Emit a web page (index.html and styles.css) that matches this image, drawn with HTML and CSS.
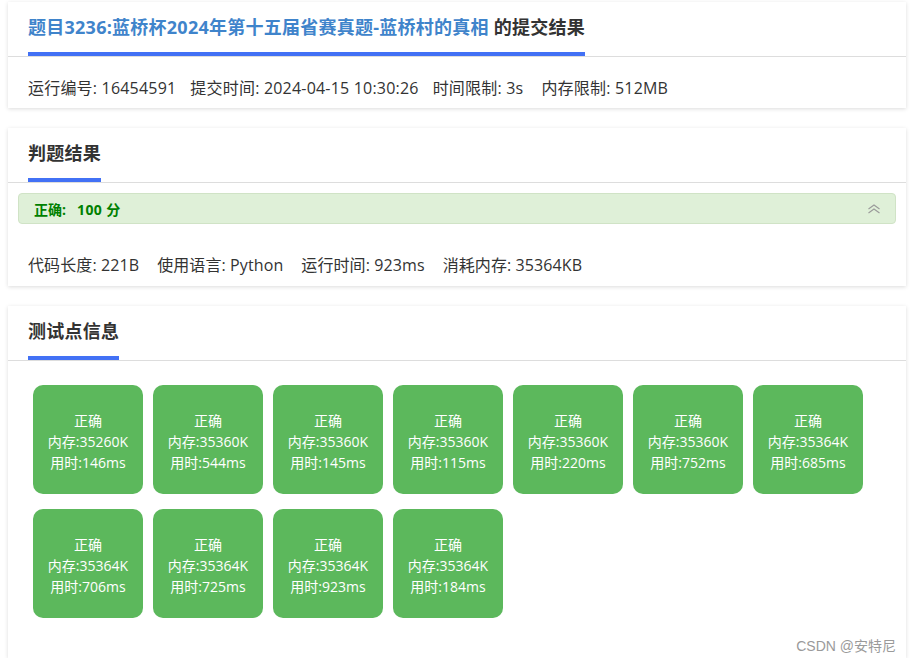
FILE: index.html
```html
<!DOCTYPE html>
<html lang="zh-CN">
<head>
<meta charset="utf-8">
<title>提交结果</title>
<link rel="stylesheet" href="styles.css">
</head>
<body>
<div class="page">
  <section class="card">
    <div class="card-head">
      <h2 class="card-title"><span class="problem-link">题目3236:蓝桥杯2024年第十五届省赛真题-蓝桥村的真相</span> 的提交结果</h2>
    </div>
    <div class="meta meta-top">
      <span>运行编号: 16454591</span>
      <span>提交时间: 2024-04-15 10:30:26</span>
      <span>时间限制: 3s</span>
      <span class="wide">内存限制: 512MB</span>
    </div>
  </section>

  <section class="card">
    <div class="card-head">
      <h2 class="card-title">判题结果</h2>
    </div>
    <div class="alert">
      <span class="alert-text">正确:<span class="score">100 分</span></span>
      <svg class="chev" width="14" height="10" viewBox="0 0 14 10" aria-hidden="true">
        <path d="M1.5 5 L7 1 L12.5 5 M1.5 9 L7 5 L12.5 9" fill="none" stroke="#9a9a9a" stroke-width="1.1"/>
      </svg>
    </div>
    <div class="meta meta-result">
      <span>代码长度: 221B</span>
      <span>使用语言: Python</span>
      <span>运行时间: 923ms</span>
      <span>消耗内存: 35364KB</span>
    </div>
  </section>

  <section class="card card-tests">
    <div class="card-head">
      <h2 class="card-title">测试点信息</h2>
    </div>
    <div class="tests">
      <div class="test"><span>正确</span><span>内存:35260K</span><span>用时:146ms</span></div>
      <div class="test"><span>正确</span><span>内存:35360K</span><span>用时:544ms</span></div>
      <div class="test"><span>正确</span><span>内存:35360K</span><span>用时:145ms</span></div>
      <div class="test"><span>正确</span><span>内存:35360K</span><span>用时:115ms</span></div>
      <div class="test"><span>正确</span><span>内存:35360K</span><span>用时:220ms</span></div>
      <div class="test"><span>正确</span><span>内存:35360K</span><span>用时:752ms</span></div>
      <div class="test"><span>正确</span><span>内存:35364K</span><span>用时:685ms</span></div>
      <div class="test"><span>正确</span><span>内存:35364K</span><span>用时:706ms</span></div>
      <div class="test"><span>正确</span><span>内存:35364K</span><span>用时:725ms</span></div>
      <div class="test"><span>正确</span><span>内存:35364K</span><span>用时:923ms</span></div>
      <div class="test"><span>正确</span><span>内存:35364K</span><span>用时:184ms</span></div>
    </div>
    <div class="watermark">CSDN @安特尼</div>
  </section>
</div>
</body>
</html>
```

FILE: styles.css
```css
* { box-sizing: border-box; }

html, body {
  margin: 0;
  padding: 0;
  background: #ffffff;
}

body {
  font-family: "Open Sans", "Noto Sans CJK SC", sans-serif;
  color: #333333;
}

.page {
  width: 898px;
  margin-left: 8px;
  padding-top: 2px;
  display: flex;
  flex-direction: column;
  gap: 20px;
}

.card {
  background: #ffffff;
  box-shadow: 0 1px 4px rgba(0, 0, 0, 0.14);
  position: relative;
}

.card-head {
  padding: 0 20px;
  border-bottom: 1px solid #dddddd;
  height: 55px;
}

.card-title {
  display: inline-block;
  margin: 0;
  padding: 13px 0 13px;
  line-height: 24px;
  font-size: 18px;
  font-weight: 700;
  letter-spacing: 0.25px;
  color: #333333;
  border-bottom: 4px solid #4271f5;
}

.problem-link {
  color: #3f84cb;
}

.meta {
  display: flex;
  padding: 0 20px;
  font-size: 16px;
  line-height: 18px;
  letter-spacing: 0.2px;
  color: #333333;
}

.meta-top {
  gap: 14px;
  padding-top: 22px;
  padding-bottom: 11px;
}

.meta-top .wide {
  margin-left: 4px;
}

.meta-result {
  gap: 18px;
  padding-top: 32px;
  padding-bottom: 12px;
}

.meta-result span {
  letter-spacing: 0.1px;
}

.alert {
  margin: 10px 10px 0;
  height: 31px;
  padding: 0 14px 0 15px;
  background: #dff0d8;
  border: 1px solid #d0e3c6;
  border-radius: 4px;
  display: flex;
  align-items: center;
  justify-content: space-between;
}

.alert-text {
  color: #008000;
  font-size: 14px;
  font-weight: 700;
}

.score {
  margin-left: 11px;
  letter-spacing: 0.4px;
}

.chev {
  display: block;
}

.card-tests {
  padding-bottom: 40px;
}

.tests {
  display: flex;
  flex-wrap: wrap;
  gap: 15px 10px;
  padding: 24px 25px 0;
}

.test {
  width: 110px;
  height: 109px;
  padding-top: 4px;
  background: #5cb85c;
  border-radius: 10px;
  color: #ffffff;
  font-size: 14px;
  line-height: 21px;
  display: flex;
  flex-direction: column;
  align-items: center;
  justify-content: center;
}

.watermark {
  position: absolute;
  right: 10px;
  bottom: 3px;
  font-family: "Liberation Sans", "Noto Sans CJK SC", sans-serif;
  font-size: 14px;
  color: #9a9a9a;
}
```
